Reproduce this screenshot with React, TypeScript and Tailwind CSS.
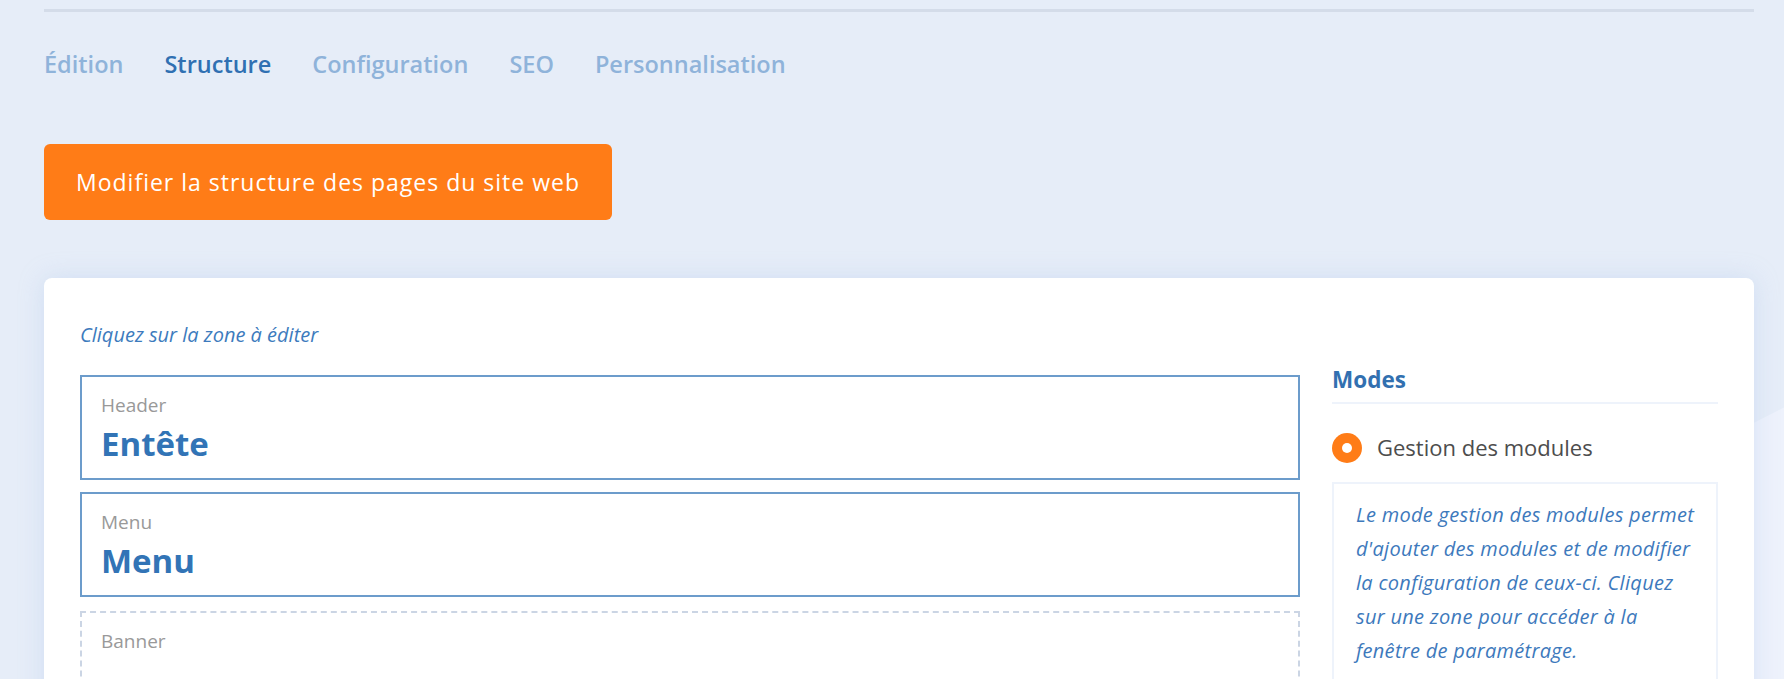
export default function App() {
  const tabs = ['Édition', 'Structure', 'Configuration', 'SEO', 'Personnalisation']

  return (
    <div
      className="relative min-h-screen overflow-hidden bg-[#e6edf8] pl-[44px] pr-[30px] pt-[9px]"
      style={{ fontFamily: '"Open Sans", "Liberation Sans", sans-serif' }}
    >
      {/* background decoration */}
      <svg className="absolute left-0 top-0 h-full w-full" viewBox="0 0 1784 679" preserveAspectRatio="none">
        <polygon points="1784,366 1784,679 1100,679" fill="#eef2fc" />
      </svg>

      <div className="relative">
        <div className="h-[3px] w-full bg-[#d4dce9]" />

        {/* Tabs */}
        <nav className="mt-[37px] flex gap-[41px] text-[23.5px] font-semibold leading-[30px] text-[#8fb3da]">
          {tabs.map((t) => (
            <span key={t} className={t === 'Structure' ? 'text-[#3070b2]' : ''}>
              {t}
            </span>
          ))}
        </nav>

        <button
          type="button"
          className="mt-[65px] h-[76px] rounded-md bg-[#ff7c17] px-[32px] text-[23px] tracking-[1px] text-white"
        >
          Modifier la structure des pages du site web
        </button>

        {/* Card */}
        <div className="mt-[58px] rounded-lg bg-white px-9 pb-10 pt-[43px] shadow-[0_0_24px_rgba(170,196,235,0.35)]">
          <p className="text-[20px] italic leading-7 text-[#3d7bbd]">Cliquez sur la zone à éditer</p>

          <div className="mt-[26px] flex gap-8">
            {/* Zones */}
            <div className="flex flex-1 flex-col gap-3">
              <div className="h-[105px] border-2 border-[#6c9ccb] px-[19px] pt-[16px]">
                <div className="text-[19px] leading-6 text-[#999999]">Header</div>
                <div className="mt-[7px] text-[33px] font-bold leading-10 text-[#3274b6]">Entête</div>
              </div>
              <div className="h-[105px] border-2 border-[#6c9ccb] px-[19px] pt-[16px]">
                <div className="text-[19px] leading-6 text-[#999999]">Menu</div>
                <div className="mt-[7px] text-[33px] font-bold leading-10 text-[#3274b6]">Menu</div>
              </div>
              <div className="mt-[2px] h-[105px] border-2 border-dashed border-[#cbd5e4] px-[19px] pt-[16px]">
                <div className="text-[19px] leading-6 text-[#999999]">Banner</div>
              </div>
            </div>

            {/* Modes */}
            <div className="w-[386px] shrink-0">
              <h3 className="mt-[-11px] border-b-2 border-[#eef3fb] pb-[6px] text-[22.5px] font-bold leading-8 text-[#3270b0]">
                Modes
              </h3>
              <div className="mt-[27px] flex items-center gap-[15px]">
                <span className="flex h-[30px] w-[30px] items-center justify-center rounded-full bg-[#ff7c17]">
                  <span className="h-[10px] w-[10px] rounded-full bg-white" />
                </span>
                <span className="text-[22px] text-[#4d4d4d]">Gestion des modules</span>
              </div>
              <div className="mt-[18px] whitespace-nowrap border-2 border-[#eef3fb] px-[22px] py-[14px] text-[20px] italic leading-[34px] tracking-[0.3px] text-[#3d79bc]">
                Le mode gestion des modules permet
                <br />
                d'ajouter des modules et de modifier
                <br />
                la configuration de ceux-ci. Cliquez
                <br />
                sur une zone pour accéder à la
                <br />
                fenêtre de paramétrage.
              </div>
            </div>
          </div>
        </div>
      </div>
    </div>
  )
}
